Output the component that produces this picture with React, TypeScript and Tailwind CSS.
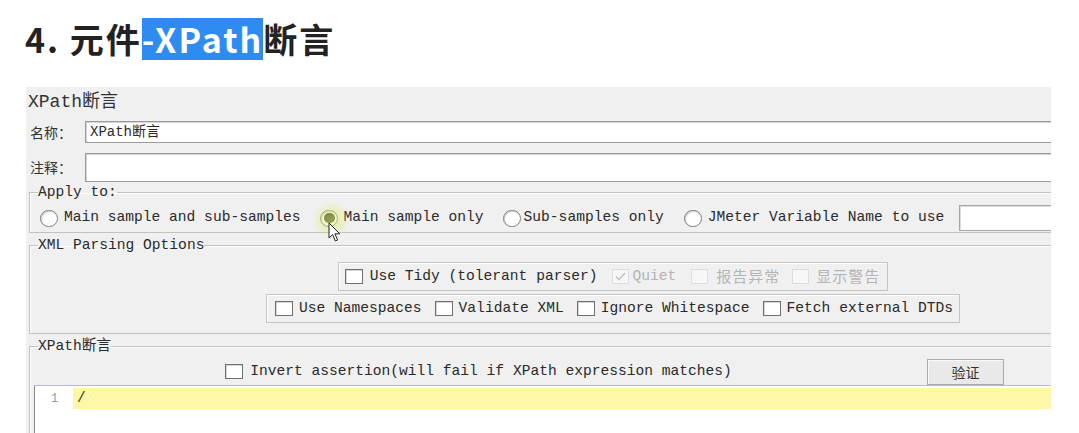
import React from "react";

function Radio({ selected }: { selected?: boolean }) {
  return (
    <span className="shrink-0 w-[18px] h-[17px] rounded-full border border-[#7d7d7d] bg-white flex items-center justify-center shadow-[inset_1px_1px_1px_#cfcfcf]">
      {selected && <span className="w-[11px] h-[10px] rounded-full bg-[#3a4424]" />}
    </span>
  );
}

function Check({ disabled, checked }: { disabled?: boolean; checked?: boolean }) {
  if (disabled) {
    return (
      <span className="shrink-0 w-[17px] h-[15px] border border-[#dcdcdc] bg-[#f7f7f7] flex items-center justify-center">
        {checked && (
          <svg width="11" height="9" viewBox="0 0 11 9">
            <path d="M1 4.5 L4 7.5 L10 1" fill="none" stroke="#c4c4c4" strokeWidth="1.6" />
          </svg>
        )}
      </span>
    );
  }
  return <span className="shrink-0 block w-[18px] h-[15px] border border-[#6f6f6f] bg-white shadow-[inset_1px_1px_0_#d6d6d6]" />;
}

export default function App() {
  return (
    <div className="relative w-[1079px] h-[433px] overflow-hidden bg-white font-['Liberation_Mono','Noto_Sans_CJK_SC',monospace] text-[14.6px] text-[#2a2a2a] whitespace-nowrap">
      {/* Title */}
      <div className="pl-[25px] pt-[18px] h-[60px] flex items-center font-['Noto_Sans_CJK_SC','Noto_Sans',sans-serif] font-bold text-[34px] tracking-[2px] leading-[42px] text-[#222]">
        <span>4. 元件</span>
        <span className="bg-[#2e8bf0] text-white h-[42px] flex items-center">-XPath</span>
        <span>断言</span>
      </div>

      {/* Panel */}
      <div className="mt-[27px] ml-[26px] w-[1025px] h-[346px] overflow-hidden bg-[#f0f0f0]">
        <div className="w-[1200px]">
          <div className="pl-[2px] pt-[5px] h-[25px] leading-[20px] text-[18px] text-[#333]">XPath断言</div>

          <div className="mt-[9px] flex items-center h-[22px]">
            <div className="w-[59px] pl-[4px] text-[14px] font-['Noto_Sans_CJK_SC',sans-serif] text-[#333]">名称：</div>
            <div className="flex-1 h-[22px] bg-white border border-[#9a9a9a] shadow-[inset_1px_1px_0_#d4d4d4] pl-[4px] flex items-center text-[14px]">
              XPath断言
            </div>
          </div>

          <div className="mt-[10px] flex items-center h-[29px]">
            <div className="w-[59px] pl-[4px] text-[14px] font-['Noto_Sans_CJK_SC',sans-serif] text-[#333]">注释：</div>
            <div className="flex-1 h-[29px] bg-white border border-[#9a9a9a] shadow-[inset_1px_1px_0_#d4d4d4]" />
          </div>

          {/* Apply to */}
          <fieldset className="mt-[2px] ml-[3px] w-[1168px] border border-[#c2c2c2] shadow-[inset_1px_1px_0_#ffffff]">
            <legend className="ml-[8px] leading-[16px] text-[14.6px]">Apply to:</legend>
            <div className="mt-[4px] h-[28px] flex items-center pl-[10px]">
              <Radio />
              <span className="shrink-0 ml-[6px]">Main sample and sub-samples</span>
              <span className="shrink-0 ml-[20px]"><Radio selected /></span>
              <span className="shrink-0 ml-[5px]">Main sample only</span>
              <span className="shrink-0 ml-[19px]"><Radio /></span>
              <span className="shrink-0 ml-[3px]">Sub-samples only</span>
              <span className="shrink-0 ml-[20px]"><Radio /></span>
              <span className="shrink-0 ml-[6px]">JMeter Variable Name to use</span>
              <span className="shrink-0 ml-[15px] w-[180px] h-[26px] bg-white border border-[#a6a6a6] shadow-[inset_1px_1px_0_#dadada]" />
            </div>
          </fieldset>

          {/* XML Parsing Options */}
          <fieldset className="mt-[4px] ml-[3px] w-[1168px] pb-[10px] border border-[#c2c2c2] shadow-[inset_1px_1px_0_#ffffff]">
            <legend className="ml-[8px] leading-[16px]">XML Parsing Options</legend>
            <div className="flex flex-col items-center">
              <div className="mt-[9px] h-[29px] pl-[6px] pr-[7px] flex items-center border border-[#c4c4c4] shadow-[inset_1px_1px_0_#ffffff]">
                <Check />
                <span className="ml-[7px]">Use Tidy (tolerant parser)</span>
                <span className="ml-[15px]"><Check disabled checked /></span>
                <span className="ml-[3px] text-[#b4b4b4]">Quiet</span>
                <span className="ml-[15px]"><Check disabled /></span>
                <span className="ml-[8px] text-[#b4b4b4] font-['Noto_Sans_CJK_SC',sans-serif] text-[15px] tracking-[1px]">报告异常</span>
                <span className="ml-[12px]"><Check disabled /></span>
                <span className="ml-[7px] text-[#b4b4b4] font-['Noto_Sans_CJK_SC',sans-serif] text-[15px] tracking-[1px]">显示警告</span>
              </div>
              <div className="mt-[3px] h-[29px] pl-[8px] pr-[6px] flex items-center border border-[#c4c4c4] shadow-[inset_1px_1px_0_#ffffff]">
                <Check />
                <span className="ml-[6px]">Use Namespaces</span>
                <span className="ml-[13px]"><Check /></span>
                <span className="ml-[6px]">Validate XML</span>
                <span className="ml-[13px]"><Check /></span>
                <span className="ml-[6px]">Ignore Whitespace</span>
                <span className="ml-[13px]"><Check /></span>
                <span className="ml-[6px]">Fetch external DTDs</span>
              </div>
            </div>
          </fieldset>

          {/* XPath断言 */}
          <fieldset className="mt-[4px] ml-[3px] w-[1168px] border border-b-0 border-[#c2c2c2] shadow-[inset_1px_1px_0_#ffffff]">
            <legend className="ml-[8px] leading-[16px]">XPath断言</legend>
            <div className="mt-[5px] h-[26px] flex items-center">
              <div className="flex-1 flex items-center justify-center">
                <Check />
                <span className="ml-[7px]">Invert assertion(will fail if XPath expression matches)</span>
              </div>
              <button className="w-[77px] h-[26px] border border-[#a9a9a9] bg-[#e9e9e9] shadow-[inset_1px_1px_0_#fafafa] font-['Noto_Sans_CJK_SC',sans-serif] text-[14px] text-[#333] flex items-center justify-center">
                验证
              </button>
              <div className="w-[192px]" />
            </div>
            <div className="mx-[4px] h-[60px] border-t border-[#bdb6d8] bg-white flex">
              <div className="w-[39px] border-l border-[#8c8c8c] pt-[2px]">
                <div className="h-[21px] pl-[16px] flex items-center text-[12px] text-[#9a9a9a]">1</div>
              </div>
              <div className="flex-1 pt-[2px]">
                <div className="h-[21px] bg-[#fcf8a8] pl-[4px] flex items-center text-[#3a3a20]">/</div>
              </div>
            </div>
          </fieldset>
        </div>
      </div>

      {/* mouse highlight + cursor overlay */}
      <div className="absolute left-[313px] top-[202px] w-[36px] h-[36px] rounded-full bg-[radial-gradient(circle,rgba(226,236,120,0.55)_0%,rgba(226,236,120,0.35)_45%,rgba(226,236,120,0)_72%)] pointer-events-none" />
      <svg className="absolute left-[328px] top-[222px] pointer-events-none" width="14" height="21" viewBox="0 0 14 21">
        <path d="M1 1 L1 16 L4.6 12.6 L7.4 19 L9.6 18 L6.9 11.8 L11.8 11.8 Z" fill="#ffffff" stroke="#222" strokeWidth="1" strokeLinejoin="round" />
      </svg>
    </div>
  );
}
